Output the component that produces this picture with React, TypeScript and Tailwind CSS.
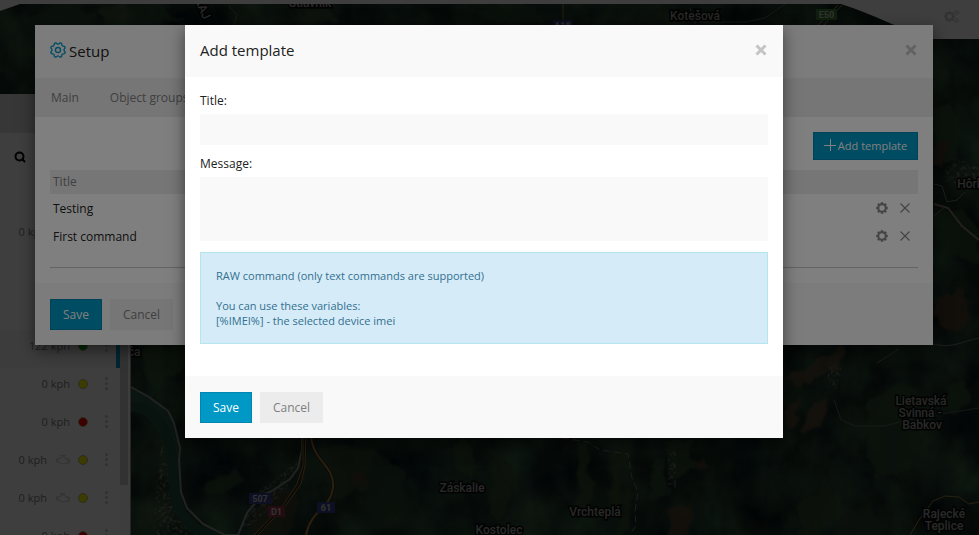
import React from "react";
import { Search } from "lucide-react";

const engine = "M2 7h2V5h3l1-2h5l1 2h2v2h2v-1h1v5h-1v-1h-1l-2 2H8l-2-2H4V8M2 5v5M10.500 3V1M7 1h7";

function SolidGear({ className }: { className: string }) {
  const teeth = [0, 45, 90, 135, 180, 225, 270, 315];
  return (
    <svg viewBox="0 0 24 24" className={className} fill="none" stroke="currentColor" aria-hidden="true">
      <circle cx="12" cy="12" r="7.4" strokeWidth="4" />
      {teeth.map((a) => (
        <path key={a} d="M12 4V0.5" strokeWidth="5" transform={`rotate(${a} 12 12)`} />
      ))}
    </svg>
  );
}

function ScallopGear() {
  return (
    <svg viewBox="0 0 24 24" className="size-4 text-[#0098c8]" fill="none" stroke="currentColor" strokeWidth="2" strokeLinejoin="round" aria-hidden="true">
      <path d="M9 1.200Q12 5 15 1.200L17.500 2.200Q17.200 6.800 21.800 6.500L22.800 9Q19 12 22.800 15L21.800 17.500Q17.200 17.200 17.500 21.800L15 22.800Q12 19 9 22.800L6.500 21.800Q6.800 17.200 2.200 17.500L1.200 15Q5 12 1.200 9L2.200 6.500Q6.800 6.800 6.500 2.200z" />
      <circle cx="12" cy="12" r="3.800" />
    </svg>
  );
}

function CloseX() {
  return (
    <svg viewBox="0 0 12 12" className="size-3" stroke="#c4c4c4" strokeWidth="3" aria-hidden="true">
      <path d="M1.500 1.500l9 9M10.500 1.500l-9 9" />
    </svg>
  );
}

const labels: { x: number; y: number; t: string; r?: number }[] = [
  { x: 310, y: 7, t: "Štiavnik" },
  { x: 695, y: 20, t: "Kotešová" },
  { x: 462, y: 492, t: "Záskalie" },
  { x: 595, y: 516, t: "Vrchteplá" },
  { x: 499, y: 534, t: "Kostolec" },
  { x: 921, y: 405, t: "Lietavská" },
  { x: 920, y: 417, t: "Svinná -" },
  { x: 922, y: 429, t: "Babkov" },
  { x: 944, y: 518, t: "Rajecké" },
  { x: 944, y: 530, t: "Teplice" },
  { x: 973, y: 188, t: "Hôrky" },
  { x: 134, y: 356, t: "ča" },
  { x: 199, y: 10, t: "RAJ", r: 66 },
];

const fields: [string, string][] = [
  ["#33502f", "M145 345h45l-8 28-30 14-12-18z"],
  ["#2b4a2c", "M205 485l30-14 8 12-18 10-14 2z"],
  ["#34462e", "M325 445l50 5-8 40-38 8z"],
  ["#4d3c30", "M352 470l12-2 4 16-14 2z"],
  ["#263f28", "M370 455l28 10 12 40-30 22-15-20z"],
  ["#324c2c", "M450 450l14-14 14 30-8 18zM490 460l15-10 10 30-15 40-10-10z"],
  ["#354f2b", "M576 445l10-8 6 50-4 30-8-4zM610 455l12-5 2 50-12 14zM620 505l12-15-4 40-12 8z"],
  ["#5b4a34", "M786 380l30-18 28-14-6 20-44 20z"],
  ["#5e4b34", "M787 402l14-4-3 20-10 8zM800 425l20-28 8-2-6 24-18 20z"],
  ["#2f4a30", "M870 400l25-18 22 10 5 50-15 30-30 6-12-36zM945 390l18-10 8 18-12 14-18 2z"],
  ["#2f4b2e", "M650 470l14-14 4 36-18 10zM665 445l26-8 4 34-22 10z"],
  ["#55402f", "M692 462l12-8 3 10-8 8zM670 510l22-5-5 30h-20z"],
  ["#304a2a", "M800 505l28-16 12 20-20 26h-22z"],
  ["#303e30", "M845 512l26-6 10 29h-50z"],
  ["#30492d", "M934 110l18-5 12 25-8 28-22 5z"],
  ["#503c2d", "M937 140l10 2-4 28-9-4z"],
  ["#54402d", "M934 302l20-12 18 14-8 28-28-8z"],
  ["#2b4a2c", "M934 214l26-6 19 24v28l-34-6z"],
  ["#29422b", "M20 20l40-14 40 8-22 14-50 6zM130 8h36l20 14h-50zM470 8l60-2 20 16h-60z"],
  ["#405038", "M100 8l20-4 10 18-22 2zM300 10l30-3 8 17h-30z"],
  ["#3d3d2c", "M262 500l24-14 14 18-16 31h-34z"],
];

function Shield({ x, y, w, t, c }: { x: number; y: number; w: number; t: string; c: string }) {
  return (
    <g>
      <rect x={x} y={y} width={w} height="11" fill={c} />
      <text x={x + w / 2} y={y + 9} textAnchor="middle" fontSize="9" fontWeight="700" fill="#c8c8c8">{t}</text>
    </g>
  );
}

function SatelliteMap() {
  return (
    <svg viewBox="0 0 979 535" preserveAspectRatio="xMinYMin slice" className="absolute inset-0 size-full font-[Roboto,sans-serif]" aria-label="Satellite map">
      <defs>
        <filter id="terrain" x="0" y="0" width="100%" height="100%" colorInterpolationFilters="sRGB">
          <feTurbulence type="fractalNoise" baseFrequency="0.022 0.018" numOctaves="6" seed="12" />
          <feColorMatrix values="0.3 0 0 0 -0.030  0.42 0.06 0 0 -0.030  0.22 0.08 0 0 0.010  0 0 0 0 1" />
        </filter>
        <filter id="ground" x="0" y="0" width="100%" height="100%" colorInterpolationFilters="sRGB">
          <feTurbulence type="fractalNoise" baseFrequency="0.3" numOctaves="3" seed="4" />
          <feColorMatrix values="1 0 0 0 0  0.950 0 0 0 0  0.850 0 0 0 0  0 5 0 0 -2.300" />
          <feComposite in2="SourceGraphic" operator="in" />
        </filter>
        <filter id="rough" x="-10%" y="-10%" width="120%" height="120%" colorInterpolationFilters="sRGB">
          <feTurbulence type="fractalNoise" baseFrequency="0.060" numOctaves="4" result="n" />
          <feDisplacementMap in="SourceGraphic" in2="n" scale="16" xChannelSelector="R" yChannelSelector="G" />
          <feGaussianBlur stdDeviation="1" />
        </filter>
      </defs>
      <rect width="979" height="535" fill="#18291f" />
      <rect width="979" height="535" filter="url(#terrain)" />
      <g filter="url(#rough)" opacity="0.800">
        {fields.map(([c, d]) => <path key={d} d={d} fill={c} />)}
      </g>
      <g filter="url(#ground)" opacity="0.500">
        <path d="M153 535l4-60 6-40 6 40 4 32 20 28zM240 528l14-34 28-20 16-14-5 18-15 22-25 24zM829 362l12 6-4 22-10-4zM945 168l15-8 19 6v20l-34-4zM668 450l8 2v36l-8-4z" />
      </g>
      <path d="M131 387l20 10 20 18 7 30 1 40 6 26 16 18 26 6h-33l-16-20-6-30-8-40c-6-20-16-32-33-34z" fill="#2a5244" />
      <path d="M131 407c22 0 32 14 38 36s2 46 10 66 24 24 44 30" fill="none" stroke="#214a3e" strokeWidth="10" />
      <path d="M131 387l18 10 19 14 6 12 6 25-1 12 2 32 6 16 16 16 22 11h13l9-22 15-18 10-4 18-12 8-11 4-18v-20" fill="none" stroke="#858b88" strokeWidth="2" strokeLinejoin="round" />
      <g fill="none" stroke="#2b2417" strokeWidth="4">
        <path d="M256 535l28-30 15-21 4-16 1-35M311 433c0 28 24 32 22 54s-22 22-27 48" />
      </g>
      <g fill="none" stroke="#a08040" strokeWidth="1">
        <path d="M254 535l29-30 14-21 6-18v-33M258 535l28-30 15-21 4-18 1-33" />
        <path d="M311 433c0 28 24 32 22 54s-22 22-27 48" strokeWidth="2" />
        <path d="M563 4v21M818 25l20-20M824 25l18-20M910 535l9-15 14-19 12-5 14 1 10 7 10-2" />
      </g>
      <g fill="none" stroke="#6f7b72" strokeWidth="1">
        <path d="M700 22h45l20-4 20-14M690 8l6 17M229 6l8 9-3 10M834 400l7 20 14 6h30l30-8 64-10" strokeOpacity="0.700" />
        <path d="M934 184l8 2 5 16 10-2 8-8M934 216l12-10M933 344c20 5 30-3 46-6M877 363l22-14" />
        <path d="M934 204l14 4 14 18 17 14" stroke="#8d7d70" strokeWidth="2" />
        <path d="M562 438l26 4 12 8 28 4 4 24 6 14-3 20 1 14-6 8" strokeDasharray="7 4" />
      </g>
      <g fontSize="12" fontWeight="500" fill="#a4a4a4" stroke="#080b08" strokeWidth="3" paintOrder="stroke" textAnchor="middle">
        {labels.map((l) => (
          <text key={l.t} x={l.x} y={l.y} transform={l.r ? `rotate(${l.r} ${l.x} ${l.y})` : undefined}>{l.t}</text>
        ))}
      </g>
      <Shield x={249} y={493} w={22} t="507" c="#36438a" />
      <Shield x={268} y={506} w={17} t="D1" c="#8e3144" />
      <Shield x={317} y={502} w={18} t="61" c="#36438a" />
      <Shield x={816} y={9} w={21} t="E50" c="#3d7a33" />
      <Shield x={553} y={20} w={19} t="A18" c="#36438a" />
      <path d="M0 0h979v39h-46c-30-8-60-25-92-35H20L0 11z" fill="#fafafa" />
    </svg>
  );
}

const units = [
  { speed: "0 kph", dot: "bg-[#f0f000]", icon: true },
  { speed: "0 kph", dot: "bg-[#f0f000]", icon: false },
  { speed: "0 kph", dot: "bg-[#f00000]", icon: false },
  { speed: "122 kph", dot: "bg-[#00a800]", icon: false, active: true },
  { speed: "0 kph", dot: "bg-[#f0f000]", icon: false },
  { speed: "0 kph", dot: "bg-[#f00000]", icon: false },
  { speed: "0 kph", dot: "bg-[#f0f000]", icon: true },
  { speed: "0 kph", dot: "bg-[#f0f000]", icon: true },
  { speed: "0 kph", dot: "bg-[#f00000]", icon: false },
];

function Sidebar() {
  return (
    <aside className="relative mt-[94px] flex w-[131px] shrink-0 border-r border-[#999] bg-[#fafafa] text-[11px] text-[#808080]">
      <div className="min-w-0 flex-1">
        <div className="h-[39px] bg-[#dcdcdc]" />
        <div className="flex h-[83px] items-start pt-[18px] pl-[14px]">
          <button aria-label="Search" className="text-black"><Search className="size-3" strokeWidth={4} /></button>
        </div>
        {units.map((u, i) => (
          <div key={i} className={`flex h-[38px] items-center justify-end pb-[7px] ${u.active ? "border-r-4 border-[#0098c8] bg-[#f2f2f2] pr-2" : "pr-3"}`}>
            <span>{u.speed}</span>
            {u.icon && (
              <svg viewBox="0 0 20 14" className="ml-2 h-3 w-[15px]" fill="none" stroke="#d0d0d0" strokeWidth="1.500" aria-hidden="true"><path d={engine} /></svg>
            )}
            <i className={`ml-2 size-[10px] rounded-full border border-[#b0b080] ${u.dot}`} />
            <span className="ml-[17px] flex w-[3px] flex-col gap-[2px]">
              <i className="size-[3px] rounded-full bg-[#c4c4c4]" /><i className="size-[3px] rounded-full bg-[#c4c4c4]" /><i className="size-[3px] rounded-full bg-[#c4c4c4]" />
            </span>
          </div>
        ))}
      </div>
      <div className="w-[10px] bg-[#f4f4f4] pr-[2px]"><div className="h-[391px] bg-[#c8c8c8]" /></div>
    </aside>
  );
}

const primary = "border border-[#0086b0] bg-[#0098c4] text-white";

function Actions() {
  return (
    <footer className="flex h-[62px] gap-2 bg-[#f9f9f9] px-[15px] pt-4">
      <button className={`h-[31px] w-[52px] ${primary}`}>Save</button>
      <button className="h-[31px] w-[63px] bg-[#ececec] text-[#808080]">Cancel</button>
    </footer>
  );
}

function SetupDialog() {
  return (
    <section className="w-full max-w-[898px] bg-white shadow-[0_5px_15px_rgba(0,0,0,0.5)]">
      <header className="flex h-[53px] items-center justify-between bg-[#f9f9f9] px-[15px] pb-[3px]">
        <h2 className="flex items-center gap-[3px] text-[15px]"><ScallopGear /><span className="pt-[2px]">Setup</span></h2>
        <button aria-label="Close setup" className="px-[1px]"><CloseX /></button>
      </header>
      <nav className="flex h-[39px] items-center gap-[31px] bg-[#ececec] px-4 text-[#808080]">
        <a href="#main">Main</a>
        <a href="#groups">Object groups</a>
      </nav>
      <div className="px-[15px] pt-[15px] pb-[15px]">
        <div className="mb-[10px] flex justify-end">
          <button className={`flex h-7 w-[105px] items-center justify-center gap-[2px] pb-[2px] text-[11px] ${primary}`}>
            <svg viewBox="0 0 12 12" className="size-3" stroke="currentColor" aria-hidden="true"><path d="M6.500 0v12M0 6.500h12" /></svg>
            Add template
          </button>
        </div>
        <table className="w-full text-left">
          <thead><tr className="h-6 bg-[#ececec] text-[#808080]"><th className="px-[3px] pb-[2px] font-normal">Title</th><th /></tr></thead>
          <tbody>
            {["Testing", "First command"].map((t) => (
              <tr key={t} className="h-7">
                <td className="px-[3px]">{t}</td>
                <td>
                  <div className="flex items-center justify-end gap-[12px] pr-2 text-[#888]">
                    <button aria-label={`Edit ${t}`}><SolidGear className="size-3" /></button>
                    <button aria-label={`Delete ${t}`}>
                      <svg viewBox="0 0 10 10" className="size-[10px]" stroke="currentColor" strokeWidth="1.200" aria-hidden="true"><path d="M.5.5l9 9M9.500.5l-9 9" /></svg>
                    </button>
                  </div>
                </td>
              </tr>
            ))}
          </tbody>
        </table>
        <hr className="mt-[17px] border-[#c8c8c8]" />
      </div>
      <Actions />
    </section>
  );
}

function TemplateDialog() {
  return (
    <section role="dialog" aria-label="Add template" className="w-full max-w-[598px] bg-white shadow-[0_5px_15px_rgba(0,0,0,0.5)]">
      <header className="flex h-[52px] items-center justify-between bg-[#f9f9f9] px-[15px] pb-[2px]">
        <h2 className="text-[15px]">Add template</h2>
        <button aria-label="Close" className="px-[1px]"><CloseX /></button>
      </header>
      <form className="flex flex-col px-[15px] pt-[15px] pb-8">
        <label htmlFor="title" className="mb-[5px]">Title:</label>
        <input id="title" className="mb-[10px] h-[31px] w-full bg-[#f9f9f9] px-3 outline-none" />
        <label htmlFor="message" className="mb-[5px]">Message:</label>
        <textarea id="message" className="mb-[11px] h-16 w-full resize-none bg-[#f9f9f9] p-3 outline-none" />
        <div className="border border-[#b4e6f0] bg-[#d6ebf8] p-[15px] text-[11px] leading-[15px] text-[#31708f]">
          <p className="mb-[15px]">RAW command (only text commands are supported)</p>
          <p>You can use these variables:</p>
          <p>[%IMEI%] - the selected device imei</p>
        </div>
      </form>
      <Actions />
    </section>
  );
}

export default function App() {
  return (
    <main className="relative min-h-screen overflow-hidden font-['Open_Sans',sans-serif] text-[12px] leading-[17px] text-[#222]">
      <SatelliteMap />
      <div className="absolute inset-0 flex"><Sidebar /></div>
      <SolidGear className="absolute top-[11px] right-[24px] size-[11px] text-[#c4c4c4]" />
      <SolidGear className="absolute top-[10px] right-[20px] size-[5px] text-[#c4c4c4]" />
      <SolidGear className="absolute top-[18px] right-[20px] size-[5px] text-[#c4c4c4]" />
      <div className="absolute inset-0 flex items-start justify-center bg-black/50 pt-[25px] pr-[11px]"><SetupDialog /></div>
      <div className="absolute inset-0 flex items-start justify-center bg-black/50 pt-[25px] pr-[11px]"><TemplateDialog /></div>
    </main>
  );
}
